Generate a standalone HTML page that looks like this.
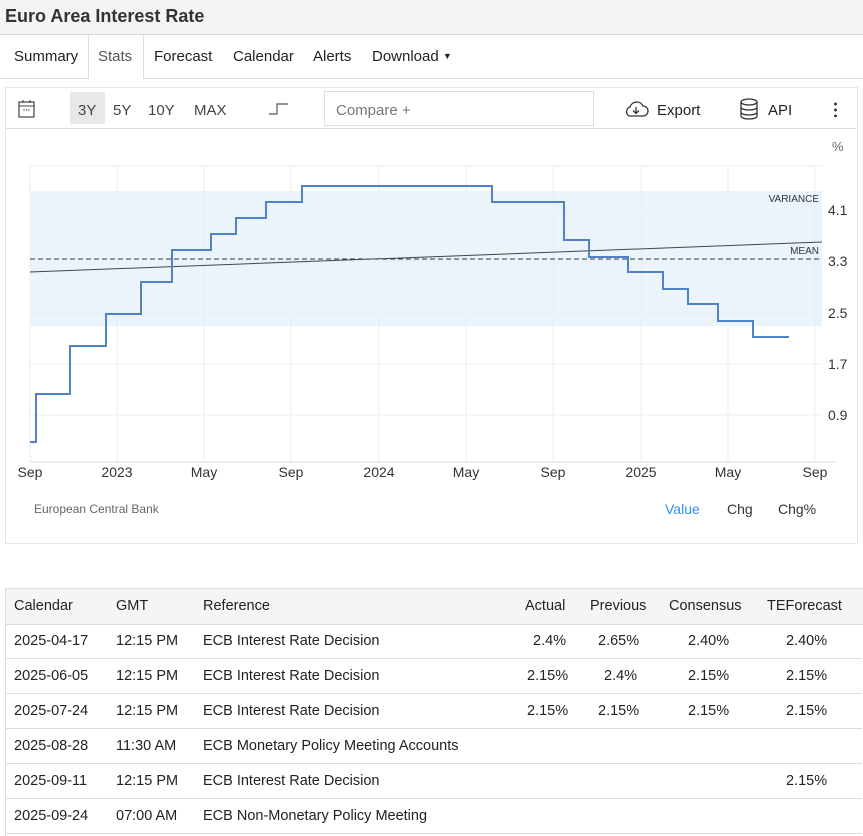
<!DOCTYPE html><html><head><meta charset="utf-8"><style>
body{margin:0;width:863px;height:836px;position:relative;font-family:"Liberation Sans",sans-serif;background:#fff;color:#222;overflow:hidden}
.a{position:absolute;white-space:nowrap}
.t{font-size:15px}
</style></head><body>
<div class="a" style="left:0;top:0;width:863px;height:34px;background:#f4f4f4;border-bottom:1px solid #d8d8d8"></div>
<div class="a" style="left:5px;top:6px;font-size:18px;font-weight:bold;color:#333">Euro Area Interest Rate</div>
<div class="a" style="left:0;top:78px;width:863px;border-top:1px solid #ddd"></div>
<div class="a" style="left:88px;top:35px;width:54px;height:44px;border-left:1px solid #ddd;border-right:1px solid #ddd;background:#fff"></div>
<div class="a t" style="left:14px;top:48px">Summary</div>
<div class="a t" style="left:98px;top:48px;color:#555">Stats</div>
<div class="a t" style="left:154px;top:48px">Forecast</div>
<div class="a t" style="left:233px;top:48px">Calendar</div>
<div class="a t" style="left:313px;top:48px">Alerts</div>
<div class="a t" style="left:372px;top:48px">Download <span style="font-size:9px;vertical-align:2px">▼</span></div>
<div class="a" style="left:5px;top:87px;width:851px;height:455px;border:1px solid #e6e6e6"></div>
<div class="a" style="left:5px;top:87px;width:851px;height:41px;border-bottom:1px solid #ddd"></div>
<svg class="a" style="left:18px;top:99px" width="18" height="20"><rect x="1" y="3" width="15" height="15" fill="none" stroke="#444" stroke-width="1.2"/><line x1="1" y1="7" x2="16" y2="7" stroke="#444"/><line x1="5" y1="1" x2="5" y2="4" stroke="#444"/><line x1="12" y1="1" x2="12" y2="4" stroke="#444"/><circle cx="6" cy="11" r=".7" fill="#444"/><circle cx="8.5" cy="11" r=".7" fill="#444"/><circle cx="11" cy="11" r=".7" fill="#444"/></svg>
<div class="a" style="left:70px;top:92px;width:35px;height:32px;background:#e8e8e8"></div>
<div class="a t" style="left:78px;top:102px;color:#444">3Y</div>
<div class="a t" style="left:113px;top:102px;color:#444">5Y</div>
<div class="a t" style="left:148px;top:102px;color:#444">10Y</div>
<div class="a t" style="left:194px;top:102px;color:#444">MAX</div>
<svg class="a" style="left:268px;top:100px" width="24" height="16"><path d="M1 14H9V4H20" fill="none" stroke="#555" stroke-width="1.2"/></svg>
<div class="a" style="left:324px;top:91px;width:268px;height:33px;border:1px solid #ddd"></div>
<div class="a t" style="left:336px;top:102px;color:#777">Compare +</div>
<svg class="a" style="left:623px;top:100px" width="26" height="18"><path d="M6 16H20a5 5 0 0 0 0-10 7 7 0 0 0-13 1 5 5 0 0 0-1 9z" fill="none" stroke="#333" stroke-width="1.3"/><path d="M13 7v6M10 10.5l3 3 3-3" fill="none" stroke="#333" stroke-width="1.3"/></svg>
<div class="a t" style="left:657px;top:102px">Export</div>
<svg class="a" style="left:739px;top:98px" width="20" height="22"><ellipse cx="10" cy="4" rx="8" ry="3" fill="none" stroke="#333" stroke-width="1.3"/><path d="M2 4v14c0 4 16 4 16 0V4M2 9c0 4 16 4 16 0M2 14c0 4 16 4 16 0" fill="none" stroke="#333" stroke-width="1.3"/></svg>
<div class="a t" style="left:768px;top:102px">API</div>
<div class="a" style="left:834px;top:101px;width:3px;height:16px;background:radial-gradient(circle,#333 1.3px,transparent 1.6px) 0 0/3px 6px"></div>
<svg class="a" style="left:0;top:130px" width="863" height="410">
<g stroke="#ececec">
<line x1="30" y1="36" x2="822" y2="36"/><line x1="30" y1="80" x2="822" y2="80"/><line x1="30" y1="131" x2="822" y2="131"/><line x1="30" y1="183" x2="822" y2="183"/><line x1="30" y1="234" x2="822" y2="234"/><line x1="30" y1="285" x2="822" y2="285"/>
<line x1="117" y1="36" x2="117" y2="332"/><line x1="204" y1="36" x2="204" y2="332"/><line x1="291" y1="36" x2="291" y2="332"/><line x1="379" y1="36" x2="379" y2="332"/><line x1="466" y1="36" x2="466" y2="332"/><line x1="553" y1="36" x2="553" y2="332"/><line x1="641" y1="36" x2="641" y2="332"/><line x1="728" y1="36" x2="728" y2="332"/><line x1="815" y1="36" x2="815" y2="332"/><line x1="30" y1="36" x2="30" y2="332"/>
</g>
<rect x="30" y="61" width="792" height="135" fill="#e3f0f9" opacity=".7"/>
<line x1="30" y1="332" x2="835" y2="332" stroke="#ddd"/>
<line x1="30" y1="129" x2="822" y2="129" stroke="#333" stroke-dasharray="5,3"/>
<line x1="30" y1="142" x2="822" y2="112" stroke="#444" stroke-width="1"/>
<path d="M30 312H36V264H70V216H106V184H141V152H172V120H211V104H236V88H266V72H302V56H492V72H564V110H589V127H628V142H663V159H688V174H718V191H753V207H789" fill="none" stroke="#4f83c6" stroke-width="2"/>
<g font-family="Liberation Sans" font-size="14" fill="#333">
<text x="30" y="347" text-anchor="middle">Sep</text><text x="117" y="347" text-anchor="middle">2023</text><text x="204" y="347" text-anchor="middle">May</text><text x="291" y="347" text-anchor="middle">Sep</text><text x="379" y="347" text-anchor="middle">2024</text><text x="466" y="347" text-anchor="middle">May</text><text x="553" y="347" text-anchor="middle">Sep</text><text x="641" y="347" text-anchor="middle">2025</text><text x="728" y="347" text-anchor="middle">May</text><text x="815" y="347" text-anchor="middle">Sep</text>
<text x="828" y="85">4.1</text><text x="828" y="136">3.3</text><text x="828" y="188">2.5</text><text x="828" y="239">1.7</text><text x="828" y="290">0.9</text>
<text x="832" y="21" font-size="13" fill="#666">%</text>
</g>
<text x="819" y="72" font-family="Liberation Sans" font-size="10" fill="#333" text-anchor="end">VARIANCE</text>
<text x="819" y="124" font-family="Liberation Sans" font-size="10" fill="#333" text-anchor="end">MEAN</text>
<text x="34" y="383" font-family="Liberation Sans" font-size="12" fill="#666">European Central Bank</text>
<text x="665" y="384" font-family="Liberation Sans" font-size="14" fill="#2e8ff0">Value</text>
<text x="727" y="384" font-family="Liberation Sans" font-size="14" fill="#333">Chg</text>
<text x="778" y="384" font-family="Liberation Sans" font-size="14" fill="#333">Chg%</text>
</svg>
<div class="a" style="left:5px;top:588px;width:857px;height:35px;background:#f5f5f5;border:1px solid #ddd;border-bottom:1px solid #ddd"></div>
<div class="a" style="left:5px;top:588px;width:1px;height:248px;background:#ddd"></div>
<div class="a" style="left:5px;top:658px;width:857px;border-top:1px solid #ddd"></div>
<div class="a" style="left:5px;top:693px;width:857px;border-top:1px solid #ddd"></div>
<div class="a" style="left:5px;top:728px;width:857px;border-top:1px solid #ddd"></div>
<div class="a" style="left:5px;top:763px;width:857px;border-top:1px solid #ddd"></div>
<div class="a" style="left:5px;top:798px;width:857px;border-top:1px solid #ddd"></div>
<div class="a" style="left:5px;top:833px;width:857px;border-top:1px solid #ddd"></div>
<div style="font-size:14.5px">
<div class="a" style="left:14px;top:598px">Calendar</div><div class="a" style="left:116px;top:598px">GMT</div><div class="a" style="left:203px;top:598px">Reference</div>
<div class="a" style="left:525px;top:598px">Actual</div><div class="a" style="left:590px;top:598px">Previous</div><div class="a" style="left:669px;top:598px">Consensus</div><div class="a" style="left:767px;top:598px">TEForecast</div>
<div class="a" style="left:14px;top:633px">2025-04-17</div><div class="a" style="left:116px;top:633px">12:15 PM</div><div class="a" style="left:203px;top:633px">ECB Interest Rate Decision</div><div class="a" style="left:533px;top:633px">2.4%</div><div class="a" style="left:598px;top:633px">2.65%</div><div class="a" style="left:688px;top:633px">2.40%</div><div class="a" style="left:786px;top:633px">2.40%</div>
<div class="a" style="left:14px;top:668px">2025-06-05</div><div class="a" style="left:116px;top:668px">12:15 PM</div><div class="a" style="left:203px;top:668px">ECB Interest Rate Decision</div><div class="a" style="left:527px;top:668px">2.15%</div><div class="a" style="left:604px;top:668px">2.4%</div><div class="a" style="left:688px;top:668px">2.15%</div><div class="a" style="left:786px;top:668px">2.15%</div>
<div class="a" style="left:14px;top:703px">2025-07-24</div><div class="a" style="left:116px;top:703px">12:15 PM</div><div class="a" style="left:203px;top:703px">ECB Interest Rate Decision</div><div class="a" style="left:527px;top:703px">2.15%</div><div class="a" style="left:598px;top:703px">2.15%</div><div class="a" style="left:688px;top:703px">2.15%</div><div class="a" style="left:786px;top:703px">2.15%</div>
<div class="a" style="left:14px;top:738px">2025-08-28</div><div class="a" style="left:116px;top:738px">11:30 AM</div><div class="a" style="left:203px;top:738px">ECB Monetary Policy Meeting Accounts</div>
<div class="a" style="left:14px;top:773px">2025-09-11</div><div class="a" style="left:116px;top:773px">12:15 PM</div><div class="a" style="left:203px;top:773px">ECB Interest Rate Decision</div><div class="a" style="left:786px;top:773px">2.15%</div>
<div class="a" style="left:14px;top:808px">2025-09-24</div><div class="a" style="left:116px;top:808px">07:00 AM</div><div class="a" style="left:203px;top:808px">ECB Non-Monetary Policy Meeting</div>
</div>
</body></html>
